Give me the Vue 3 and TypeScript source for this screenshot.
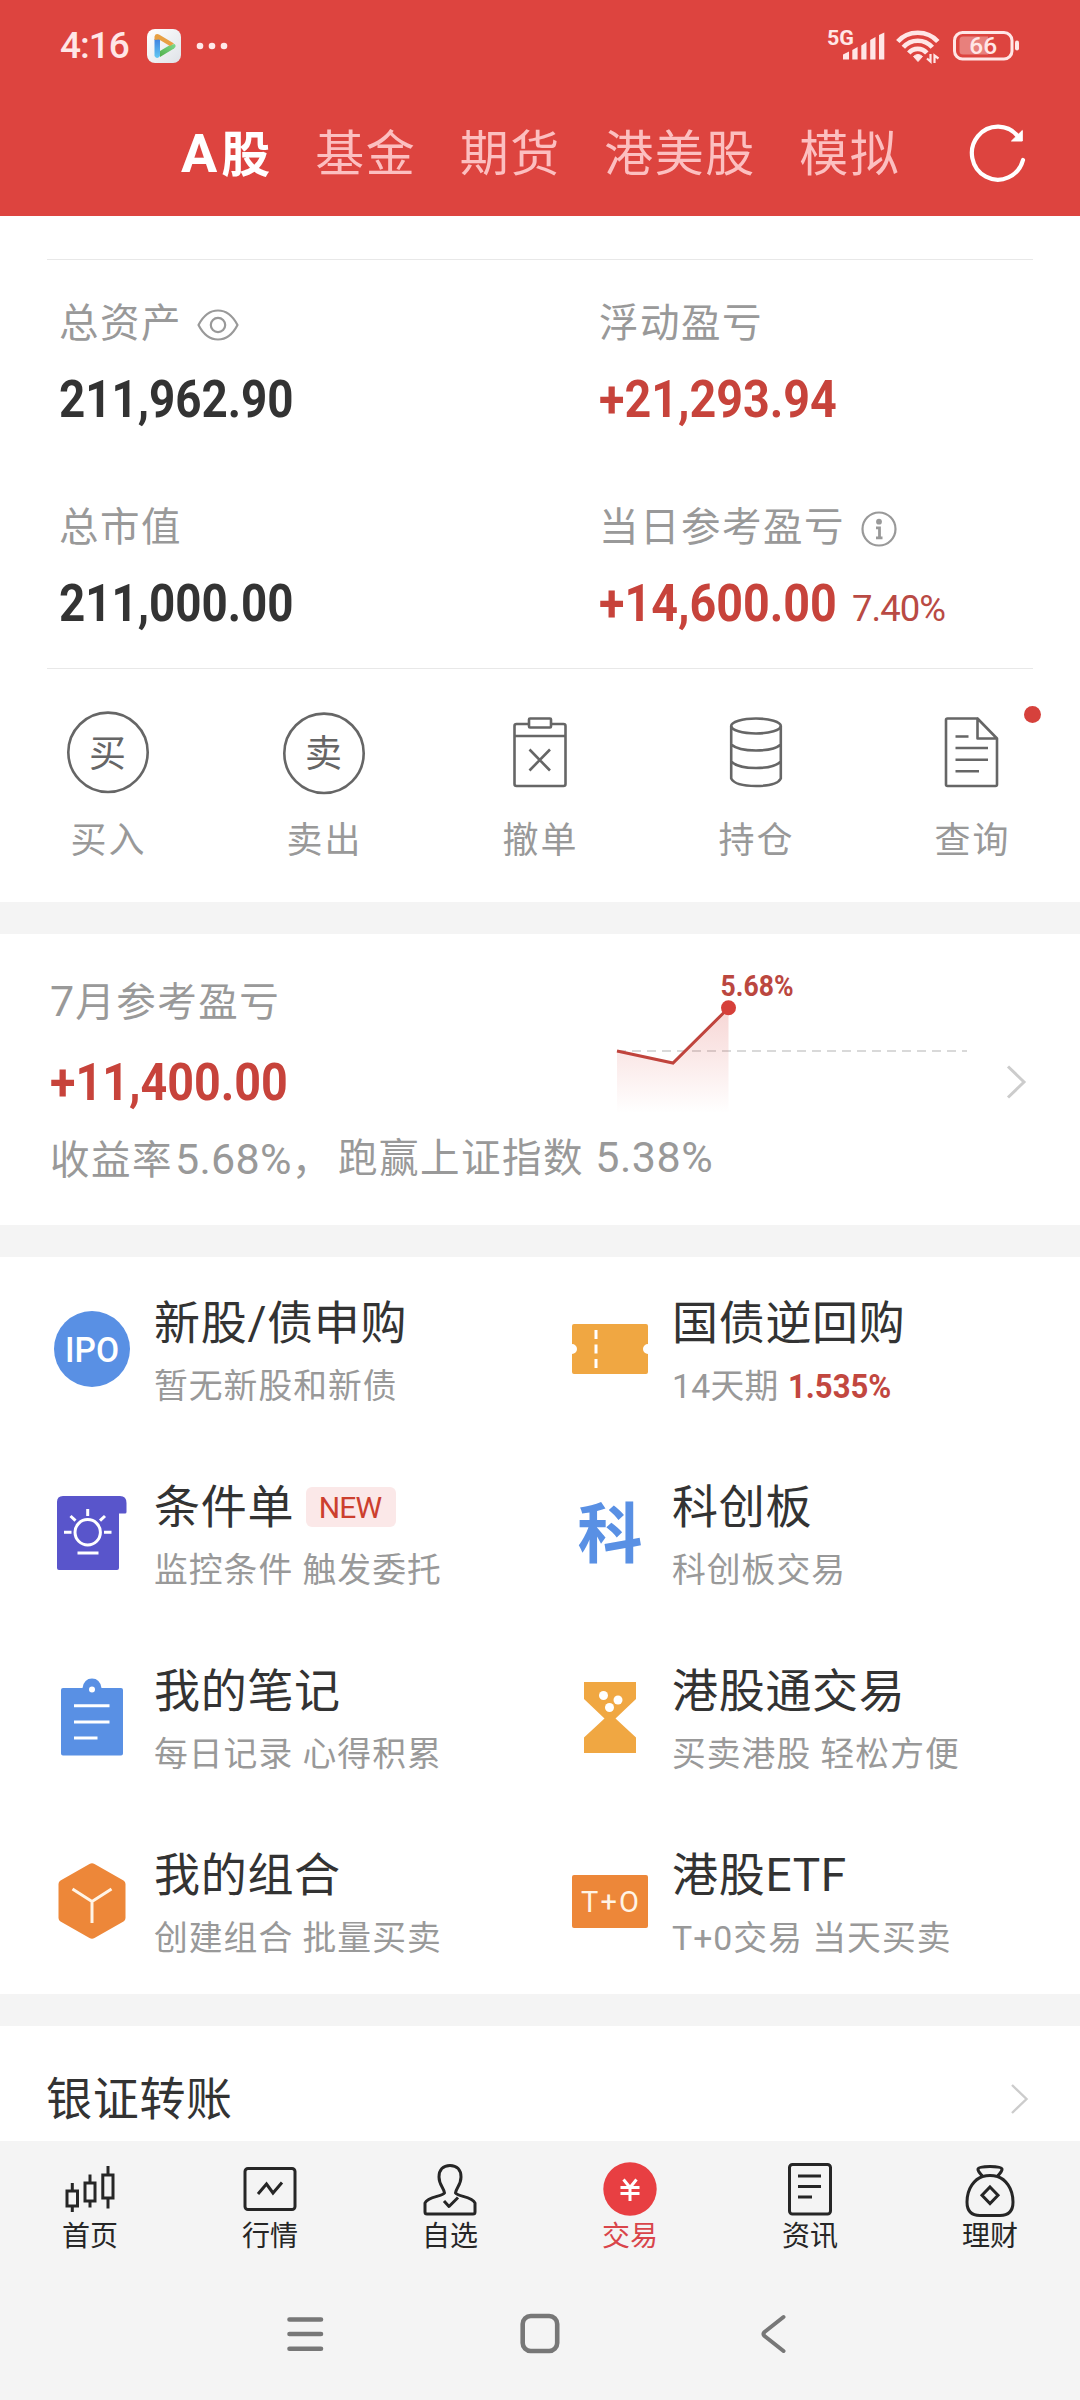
<script setup lang="ts">
interface Feature {
  icon: string
  title: string
  sub: string
  rate?: string
  badge?: string
}

const markets: string[] = ['基金', '期货', '港美股', '模拟']

const actions: { icon: string; label: string; dot?: boolean }[] = [
  { icon: 'buy', label: '买入' },
  { icon: 'sell', label: '卖出' },
  { icon: 'cancel', label: '撤单' },
  { icon: 'hold', label: '持仓' },
  { icon: 'query', label: '查询', dot: true },
]

const features: Feature[] = [
  { icon: 'ipo', title: '新股/债申购', sub: '暂无新股和新债' },
  { icon: 'ticket', title: '国债逆回购', sub: '14天期', rate: '1.535%' },
  { icon: 'cond', title: '条件单', sub: '监控条件 触发委托', badge: 'NEW' },
  { icon: 'star', title: '科创板', sub: '科创板交易' },
  { icon: 'note', title: '我的笔记', sub: '每日记录 心得积累' },
  { icon: 'glass', title: '港股通交易', sub: '买卖港股 轻松方便' },
  { icon: 'group', title: '我的组合', sub: '创建组合 批量买卖' },
  { icon: 'etf', title: '港股ETF', sub: 'T+0交易 当天买卖' },
]

const tabs: { icon: string; label: string }[] = [
  { icon: 'home', label: '首页' },
  { icon: 'quote', label: '行情' },
  { icon: 'self', label: '自选' },
  { icon: 'trade', label: '交易' },
  { icon: 'news', label: '资讯' },
  { icon: 'wealth', label: '理财' },
]
</script>

<template>
  <div class="screen">
    <header class="top">
      <div class="status">
        <span class="clock">4:16</span>
        <svg class="app" width="34" height="34" viewBox="0 0 34 34">
          <defs>
            <linearGradient id="ab" x1="0" y1="0" x2="0" y2="1"><stop offset="0" stop-color="#3d7fe0" /><stop offset="1" stop-color="#62c8f2" /></linearGradient>
            <linearGradient id="ag" x1="0" y1="1" x2="1" y2="0"><stop offset="0" stop-color="#4fb04a" /><stop offset="1" stop-color="#7fd98c" /></linearGradient>
            <linearGradient id="ac" x1="0" y1="0" x2="1" y2="1"><stop offset="0" stop-color="#fff" /><stop offset="1" stop-color="#dfe3e8" /></linearGradient>
          </defs>
          <rect width="34" height="34" rx="8" fill="url(#ac)" />
          <path d="M7.5 10 L13 9 V27 Q10 31 7.5 27 Z" fill="url(#ab)" />
          <path d="M13 22 L23 16 L27.5 15 Q30 17 27 19.500 L13 28 Z" fill="url(#ag)" />
          <path d="M7.500 11 V7.500 Q8.500 4 12 5.500 L27 14.500 L23 17 L12 10.500 Z" fill="#e8a044" />
        </svg>
        <svg class="more" width="32" height="8" viewBox="0 0 32 8" fill="#ffe8e8"><circle cx="4" cy="4" r="3.300" /><circle cx="16" cy="4" r="3.300" /><circle cx="28" cy="4" r="3.300" /></svg>
        <span class="grow"></span>
        <svg class="radio" width="200" height="40" viewBox="824 26 200 40">
          <text x="827" y="44.500" class="g5" textLength="27" lengthAdjust="spacingAndGlyphs">5G</text>
          <g fill="#ffe6e6">
            <path d="M843 54.500 L849 51.500 V59.500 H843Z M852.300 50 L857.600 47 V59.500 H852.300Z M861.300 45.500 L866.500 42 V59.500 H861.300Z M870.200 40 L875.500 37 V59.500 H870.200Z M879 35 L884.300 32.500 V59.500 H879Z" />
            <path d="M913.500 56.500 Q918 52.500 922.500 56.500 L918 61.500Z" stroke="#ffe6e6" stroke-width="1" />
          </g>
          <g fill="none" stroke="#ffe6e6" stroke-width="4.600">
            <path d="M897.800 41.500 C908 29.800 927.500 29.800 937.800 41.500" />
            <path d="M903.300 47.300 C911 38.500 924.500 38.500 932.300 47.300" />
            <path d="M908.800 53 C913.500 47.500 922 47.500 926.800 53" />
          </g>
          <path d="M930.500 54 V61.500 L927 58.500 M934.500 63 V55.500 L938.500 58.500" fill="none" stroke="#ffe6e6" stroke-width="2.200" />
          <rect x="954.500" y="32.500" width="57.500" height="26.500" rx="8" fill="none" stroke="#ffe6e6" stroke-width="3" />
          <path d="M963 36.500 H988 V54.500 H963 Q959.500 54.500 959.500 51 V40 Q959.500 36.500 963 36.500Z" fill="#e8807c" />
          <rect x="1015" y="40.500" width="4" height="10" rx="2" fill="#ffe6e6" />
          <text x="983.200" y="54.200" class="batt" text-anchor="middle">66</text>
        </svg>
      </div>
      <nav class="markets">
        <b><span class="la">A</span>股</b>
        <span v-for="m in markets" :key="m">{{ m }}</span>
        <i class="grow"></i>
        <svg class="refresh" width="60" height="60" viewBox="968 123 60 60">
          <path d="M1018.500 137 A26 26.500 0 1 0 1023 160" fill="none" stroke="#fff" stroke-width="4.200" stroke-linecap="round" />
          <path d="M1022.300 130.500 V141 H1011.500 Z" fill="#fff" stroke="#fff" stroke-width="1" />
        </svg>
      </nav>
    </header>

    <section class="assets">
      <div class="cells">
        <div class="cell">
          <div class="label">总资产
            <svg class="eye" width="42" height="34" viewBox="0 0 42 34" fill="none" stroke="#999" stroke-width="2.200"><path d="M1.500 17 Q9 2.500 21 2.500 T40.500 17 Q33 31.500 21 31.500 T1.500 17Z" stroke-linejoin="round" /><circle cx="21" cy="17" r="7.200" /></svg>
          </div>
          <div class="value"><span class="num plain">211,962.90</span></div>
        </div>
        <div class="cell">
          <div class="label">浮动盈亏</div>
          <div class="value up"><span class="num">+21,293.94</span></div>
        </div>
        <div class="cell">
          <div class="label">总市值</div>
          <div class="value"><span class="num plain">211,000.00</span></div>
        </div>
        <div class="cell">
          <div class="label">当日参考盈亏
            <svg class="info" width="36" height="36" viewBox="0 0 36 36" fill="none" stroke="#999" stroke-width="2.200"><circle cx="18" cy="18" r="16.500" /><circle cx="18" cy="10.700" r="2.900" fill="#999" stroke="none" /><path d="M15 16.800 H18.500 V26.500 M15 26.800 H21.500" stroke-width="2.800" /></svg>
          </div>
          <div class="value up"><span class="num">+14,600.00</span><span class="pct">7.40%</span></div>
        </div>
      </div>
      <div class="actions">
        <div v-for="a in actions" :key="a.label" class="action">
          <svg width="90" height="90" viewBox="-45 -45 90 90" fill="none" stroke="#666" stroke-width="2.600">
            <g v-if="a.icon === 'buy' || a.icon === 'sell'">
              <circle :cy="a.icon === 'buy' ? 0.3 : 1.3" r="39.700" />
              <text class="seal" text-anchor="middle" x="-.500" y="15">{{ a.label[0] }}</text>
            </g>
            <g v-else-if="a.icon === 'cancel'">
              <path d="M-11 -28 H-23.500 Q-25.500 -28 -25.500 -26 V32 Q-25.500 34 -23.500 34 H23.500 Q25.500 34 25.500 32 V-26 Q25.500 -28 23.500 -28 H11" />
              <rect x="-11" y="-33.500" width="22" height="9" rx="1" /><path d="M-25.500 -16 H25.500 M-10.500 -2.500 L10 18.500 M10 -2.500 L-10.500 18.500" />
            </g>
            <g v-else-if="a.icon === 'hold'">
              <ellipse cy="-26" rx="24.800" ry="7.500" />
              <path d="M-24.800 -26 V26.500 Q-21 34 0 34 T24.800 26.500 V-26 M-24.800 -7.500 Q-18 -1.500 0 -1.500 T24.800 -7.500 M-24.800 9.500 Q-18 16 0 16 T24.800 9.500" />
            </g>
            <g v-else>
              <path d="M5.500 -33.500 H-24.500 Q-26 -33.500 -26 -32 V32.500 Q-26 34 -24.500 34 H23.500 Q25 34 25 32.500 V-13.500 L5.500 -33.500 V-13.500 H25 M-16.500 -15.500 H-3.500 M-16.500 -4 H16 M-16.500 7.700 H16 M-16.500 19.200 H7" stroke-linejoin="round" />
            </g>
          </svg>
          <span>{{ a.label }}</span>
          <i v-if="a.dot" class="dot"></i>
        </div>
      </div>
    </section>

    <section class="month">
      <div class="mtext">
        <div class="mlabel"><span class="big">7</span>月参考盈亏</div>
        <div class="value up m"><span class="num">+11,400.00</span></div>
        <div class="mline"><span class="l1">收益率<span class="big wide">5.68%</span>，</span><span class="l2">跑赢上证指数 <span class="big">5.38%</span></span></div>
      </div>
      <svg class="chart" width="430" height="150" viewBox="610 970 430 150">
        <defs><linearGradient id="area" x1="0" y1="0" x2="0" y2="1"><stop offset="0" stop-color="#d8433d" stop-opacity=".22" /><stop offset="1" stop-color="#d8433d" stop-opacity="0" /></linearGradient></defs>
        <path d="M617 1051 H967" stroke="#d9d9d9" stroke-width="2" stroke-dasharray="9 6" />
        <path d="M617 1051 L673 1063 L728.500 1008 V1113 H617Z" fill="url(#area)" />
        <path d="M617 1051 L673 1063 L728.500 1008" fill="none" stroke="#c0443d" stroke-width="3" />
        <circle cx="728.500" cy="1007.700" r="7.500" fill="#d6403a" />
        <text x="720.500" y="996" class="tip" textLength="73" lengthAdjust="spacingAndGlyphs">5.68%</text>
        <path d="M1008 1066.500 L1024 1082 L1008 1097.500" fill="none" stroke="#ccc" stroke-width="3" />
      </svg>
    </section>

    <section class="features">
      <div v-for="f in features" :key="f.title" class="feature">
        <svg width="78" height="78" viewBox="-39 -39 78 78">
          <g v-if="f.icon === 'ipo'"><circle r="38" fill="#5990e4" /><text x="0" y="13" class="ipo" text-anchor="middle" textLength="54" lengthAdjust="spacingAndGlyphs">IPO</text></g>
          <g v-else-if="f.icon === 'ticket'">
            <path d="M-36 -25 H36 Q38 -25 38 -23 V-5 A5 5 0 0 0 38 5 V23 Q38 25 36 25 H-36 Q-38 25 -38 23 V5 A5 5 0 0 0 -38 -5 V-23 Q-38 -25 -36 -25Z" fill="#f0a742" />
            <path d="M-14 -19 V-10 M-14 -4.500 V4.500 M-14 10 V19" stroke="#fff" stroke-width="3" />
          </g>
          <g v-else-if="f.icon === 'cond'">
            <path d="M-29 -37 H28 Q34.500 -37 34.500 -30 V-21 Q34.500 -19.500 33 -19.500 H27 V35 Q27 37 25 37 H-33 Q-35 37 -35 35 V-31 Q-35 -37 -29 -37Z" fill="#5955cb" />
            <g fill="none" stroke="#fff" stroke-width="3"><circle cx="-4.300" cy="-.700" r="12.700" /><path d="M-14.500 20 H6.500 M-4.300 -24 V-17 M-28 -.700 H-20.500 M12 -.700 H19.500 M-21.500 -17 L-16.500 -12.300 M13 -17 L8 -12.300" /></g>
          </g>
          <text v-else-if="f.icon === 'star'" x="0" y="23.500" class="ke" text-anchor="middle">科</text>
          <g v-else-if="f.icon === 'note'">
            <path d="M-29 -29 H-9.500 Q-8 -38.500 0 -38.500 T9.500 -29 H29 Q31 -29 31 -27 V36.500 Q31 38.500 29 38.500 H-29 Q-31 38.500 -31 36.500 V-27 Q-31 -29 -29 -29Z" fill="#5990e4" />
            <circle cy="-27.500" r="3" fill="#fff" /><path d="M-18 -11.300 H17.500 M-18 5 H17.500 M-18 21 H5.500" stroke="#fff" stroke-width="3" />
          </g>
          <g v-else-if="f.icon === 'glass'">
            <path d="M-26 -35 H26 V-18 L5.500 1.500 L26 20.500 V36 H-26 V20.500 L-5.500 1.500 L-26 -18Z" fill="#f0a742" />
            <g fill="#fff"><circle cx="-6.500" cy="-21.500" r="4.500" /><circle cx="8" cy="-17" r="4.500" /><circle cx="-.500" cy="-9.500" r="4.500" /></g>
          </g>
          <g v-else-if="f.icon === 'group'">
            <path d="M-2.500 -37 Q0 -38.500 2.500 -37 L31.500 -20.500 Q33.500 -19.300 33.500 -17 V17 Q33.500 19.300 31.500 20.500 L2.500 37 Q0 38.500 -2.500 37 L-31.500 20.500 Q-33.500 19.300 -33.500 17 V-17 Q-33.500 -19.300 -31.500 -20.500Z" fill="#ed8739" />
            <path d="M-19.500 -12 L0 .500 L19.500 -12 M0 .500 V22" fill="none" stroke="#fff4e6" stroke-width="3" />
          </g>
          <g v-else><rect x="-38" y="-26" width="76" height="53" rx="2" fill="#ed8739" /><text x="0" y="10.500" class="t0" text-anchor="middle" textLength="58" lengthAdjust="spacing">T+O</text></g>
        </svg>
        <div class="ft">
          <div class="title">{{ f.title }}<span v-if="f.badge" class="badge">{{ f.badge }}</span></div>
          <div class="sub" :class="{ tight: f.rate }">{{ f.sub }}<b v-if="f.rate">{{ f.rate }}</b></div>
        </div>
      </div>
    </section>

    <section class="transfer">
      <span>银证转账</span>
      <svg width="22" height="32" viewBox="0 0 22 32"><path d="M3 2 L17.500 16 L3 30" fill="none" stroke="#ccc" stroke-width="2.400" /></svg>
    </section>

    <footer>
      <nav class="tabs">
        <div v-for="t in tabs" :key="t.label" class="tab" :class="{ on: t.icon === 'trade' }">
          <svg width="60" height="60" viewBox="-30 -30 60 60" fill="none" stroke="#262626" stroke-width="3">
            <path v-if="t.icon === 'home'" d="M-23 2 H-12.500 V17 H-23Z M-17.700 2 V-6 M-17.700 17 V23 M-5 -6 H5 V12 H-5Z M0 -6 V-14.500 M0 12 V18.500 M12.800 -14 H23 V9 H12.800Z M18 -14 V-23 M18 9 V19.500" />
            <g v-else-if="t.icon === 'quote'"><rect x="-25" y="-20.500" width="50" height="41" rx="3" /><path d="M-12 5 L-3.500 -5 L3 4 L12 -6.500" /></g>
            <path v-else-if="t.icon === 'self'" d="M-5.500 4 C-6 -1 -11 -4 -11 -12 C-11 -19 -7 -23.500 0 -23.500 S11 -19 11 -12 C11 -4 6 -1 5.500 4 C8 8 22 7 25 14 V23 Q25 25 23 25 H-23 Q-25 25 -25 23 V14 C-22 7 -8 8 -5.500 4Z M-6 12 L-1 17.500 L8 8.500" stroke-linejoin="round" />
            <g v-else-if="t.icon === 'trade'"><circle r="26.700" fill="#e83f42" stroke="none" /><path d="M-6.500 -9.500 L0 -1.500 L6.500 -9.500 M0 -1.500 V12 M-9.500 -1.500 H9.500 M-9.500 4.500 H9.500" stroke="#fff" /></g>
            <g v-else-if="t.icon === 'news'"><rect x="-20.500" y="-24.500" width="41" height="49.500" rx="3" /><path d="M-12 -13 H11 M-12 -2.500 H11 M-12 8 H2" /></g>
            <g v-else><path d="M-7.500 -12.500 C-10 -16 -12.500 -18 -12 -20 C-11 -23.500 11 -23.500 12 -20 C12.500 -18 10 -16 7.500 -12.500 Q0 -14.500 -7.500 -12.500 C-15 -10 -23 -1 -23 13 C-23 22 -19 26.500 -10 26.500 H10 C19 26.500 23 22 23 13 C23 -1 15 -10 7.500 -12.500" stroke-linejoin="round" /><path d="M0 -2 L8 6.300 L0 14.500 L-8 6.300Z" /></g>
          </svg>
          <span>{{ t.label }}</span>
        </div>
      </nav>
      <div class="sysnav">
        <svg width="540" height="50" viewBox="270 2309 540 50" fill="none" stroke="#777" stroke-width="4.600" stroke-linecap="round" stroke-linejoin="round">
          <path d="M289.500 2319.500 H321 M289.500 2334 H321 M289.500 2348.700 H321" />
          <rect x="522.700" y="2316" width="34.500" height="35" rx="8" />
          <path d="M783.500 2317 L764.500 2332 Q762.500 2334 764.500 2336 L783.500 2351" stroke-width="4" />
        </svg>
      </div>
    </footer>
  </div>
</template>

<style>
html, body { margin: 0; background: #f4f4f4; }
</style>

<style scoped>
.screen {
  width: 1080px; height: 2400px; overflow: hidden; background: #f4f4f4; color: #333;
  font-family: Roboto, "Noto Sans CJK SC", sans-serif; display: flex; flex-direction: column;
}
.screen > * { flex: none; }
svg { overflow: visible; }
.grow { flex: 1; }
.top { height: 216px; background: #dd443f; }
.status { height: 92px; padding: 0 56px 0 60px; display: flex; align-items: center; box-sizing: border-box; }
.clock { font-size: 37px; font-weight: 500; letter-spacing: -1px; color: #ffe6e6; width: 87px; line-height: 92px; }
.more { margin-left: 15px; }
.g5 { font: bold 21px Roboto; fill: #ffe6e6; }
.batt { font: 500 24.500px Roboto; fill: #ffe6e6; }
.markets { display: flex; align-items: center; height: 124px; padding: 1px 52px 0 181px; box-sizing: border-box; font-size: 49px; letter-spacing: 1.500px; color: #fcbfc0; line-height: 70px; white-space: nowrap; }
.markets > b, .markets > span { margin-right: 43.500px; }
.markets b { color: #fff; font-weight: 700; }
.la { font-size: 54px; margin-right: 4px; letter-spacing: 0; }
.refresh { flex: none; margin-top: -3px; }
.assets { background: #fff; height: 686px; display: flow-root; }
.cells { margin: 43px 47px 0; height: 408px; border-top: 1px solid #e8e8e8; border-bottom: 1px solid #e8e8e8; display: grid; grid-template-columns: 540px 1fr; grid-template-rows: 204px 204px; box-sizing: content-box; }
.cell { padding: 36px 0 0 12px; white-space: nowrap; }
.label { font-size: 39.500px; letter-spacing: 1.500px; color: #999; height: 56px; line-height: 56px; display: flex; align-items: center; }
.eye { margin: 2px 0 0 15px; }
.info { margin: 1px 0 0 15.500px; }
.value { font-size: 52px; font-weight: 700; color: #333; height: 64px; line-height: 64px; display: flex; margin-top: 16px; }
.num { transform: scaleX(.897); transform-origin: 0 50%; }
.num.plain { transform: scaleX(.88); }
.up { color: #c7433b; }
.pct { font-weight: 400; font-size: 36.500px; letter-spacing: -1px; margin-left: -12px; color: #b94a44; line-height: 74px; }
.actions { display: flex; }
.action { width: 216px; display: flex; flex-direction: column; align-items: center; position: relative; padding-top: 38px; font-size: 36px; letter-spacing: 2px; color: #999; line-height: 52px; }
.action span { margin-top: 18px; padding-left: 1px; }
.seal { font: 37px "Noto Sans CJK SC"; fill: #666; stroke: none; letter-spacing: 0; }
.dot { position: absolute; left: 160px; top: 37px; width: 17px; height: 17px; border-radius: 50%; background: #d6413c; }
.month { margin-top: 32px; height: 291px; background: #fff; display: flex; position: relative; }
.mtext { padding: 39px 0 0 50px; white-space: nowrap; color: #999; font-size: 39.500px; letter-spacing: 1.500px; }
.mlabel { height: 56px; line-height: 56px; }
.big { font-size: 43px; letter-spacing: 0; }
.mlabel .big { margin-right: 1px; }
.wide { letter-spacing: .300px; margin-left: 2px; }
.value.m { margin-top: 22px; letter-spacing: 0; }
.mline { display: flex; height: 60px; line-height: 60px; margin-top: 12px; }
.l1 { padding-top: 2px; width: 288px; }
.l2 .big { letter-spacing: .500px; }
.chart { position: absolute; left: 610px; top: 36px; }
.tip { font: 700 29px Roboto; fill: #bb473f; }
.features { margin-top: 32px; height: 737px; background: #fff; display: grid; grid-template-columns: 518px 562px; grid-template-rows: repeat(4, 184px); }
.feature { display: flex; padding: 36px 0 0 52.500px; white-space: nowrap; }
.feature > svg { margin-top: 17px; flex: none; }
.ft { margin-left: 23.500px; }
.title { font-size: 46px; letter-spacing: .700px; height: 60px; line-height: 59px; display: flex; align-items: center; }
.badge { margin-left: 12px; width: 90px; height: 40px; border-radius: 6px; background: #fbe8e8; color: #cc3f2e; font-size: 30px; letter-spacing: -.800px; line-height: 41px; text-align: center; box-sizing: border-box; padding-right: 2px; }
.sub { margin-top: 9px; font-size: 33.800px; letter-spacing: 1px; color: #999; line-height: 50px; }
.sub.tight { letter-spacing: .200px; }
.sub b { margin-left: 10px; color: #c2473f; letter-spacing: 0; display: inline-block; transform: scaleX(.92); transform-origin: 0 50%; }
.ipo { font: 500 35px Roboto; fill: #fff; }
.ke { font: 700 65px "Noto Sans CJK SC"; fill: #5990e4; }
.t0 { font: 400 29px Roboto; fill: #fff4e6; }
.transfer { margin-top: 32px; height: 115px; background: #fff; display: flex; justify-content: space-between; align-items: center; padding: 31px 49px 0 46px; box-sizing: border-box; font-size: 46px; letter-spacing: .700px; line-height: 60px; }
.tabs { display: flex; height: 145px; padding-top: 18px; box-sizing: border-box; }
.tab { width: 180px; display: flex; flex-direction: column; align-items: center; font-size: 28px; color: #262626; line-height: 36px; }
.tab.on { color: #d9454a; }
.sysnav { padding: 23px 270px 0; }
</style>
